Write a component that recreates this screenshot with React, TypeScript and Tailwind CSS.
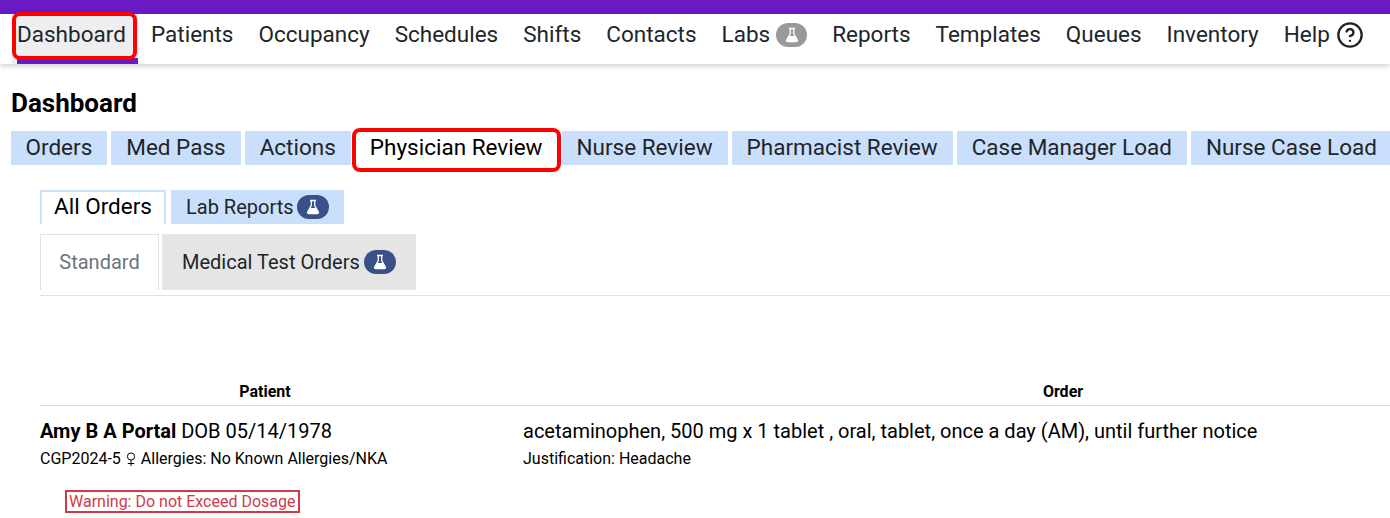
import { CircleHelp } from 'lucide-react'

const navItems = ['Patients', 'Occupancy', 'Schedules', 'Shifts', 'Contacts']
const navItemsAfter = ['Reports', 'Templates', 'Queues', 'Inventory']
const tabs = ['Orders', 'Med Pass', 'Actions', 'Physician Review', 'Nurse Review', 'Pharmacist Review', 'Case Manager Load', 'Nurse Case Load']

function Flask({ className }: { className?: string }) {
  return (
    <svg viewBox="0 0 16 16" className={className} fill="none">
      <path d="M5 1.5h6M6.3 2v4.6L2.6 13a1 1 0 0 0 .9 1.5h9a1 1 0 0 0 .9-1.5L9.7 6.6V2" stroke="white" strokeWidth="1.3" strokeLinejoin="round" />
      <path d="M5.2 9h5.6l2.1 4.2a.6.6 0 0 1-.5.9H3.6a.6.6 0 0 1-.5-.9z" fill="white" />
    </svg>
  )
}

function LabBadge({ color }: { color: string }) {
  return (
    <span className={`flex h-6 w-8 items-center justify-center rounded-full ${color}`}>
      <Flask className="h-4 w-4" />
    </span>
  )
}

export default function App() {
  return (
    <div className="h-[518px] w-[1390px] overflow-hidden bg-white font-['Roboto',sans-serif] text-black">
      <div className="h-[14px] bg-[#6a1ac4]" />
      <nav className="flex h-[50px] items-stretch pl-[12px] text-[22.5px] text-[#212529] shadow-[0_2px_6px_rgba(0,0,0,0.2)]">
        <div className="relative mr-[0.5px] flex w-[126px] items-center bg-[#eeeef0] pb-[8px] pl-[5px]">
          Dashboard
          <div className="absolute bottom-0 left-[5px] right-0 h-[6px] bg-[#6a1ac4]" />
          <div className="absolute left-0 top-[-2px] h-[48px] w-[125px] rounded-lg border-4 border-[#ff0000]" />
        </div>
        {navItems.map((item) => (
          <div key={item} className="flex items-center px-[12.5px] pb-[8px]">{item}</div>
        ))}
        <div className="flex items-center gap-[6px] px-[12.5px] pb-[8px]">
          Labs
          <span className="flex h-6 w-[31px] items-center justify-center rounded-full bg-[#999999]">
            <Flask className="h-4 w-4" />
          </span>
        </div>
        {navItemsAfter.map((item) => (
          <div key={item} className="flex items-center px-[12.5px] pb-[8px]">{item}</div>
        ))}
        <div className="flex items-center gap-[6px] px-[12.5px] pb-[8px]">
          Help
          <CircleHelp className="h-7 w-7" strokeWidth={2} />
        </div>
      </nav>

      <h1 className="ml-[11px] mt-[24px] text-[26px] font-bold leading-[30px]">Dashboard</h1>

      <div className="ml-[10.5px] mt-[13px] flex h-[34px] gap-1 text-[22.5px] text-[#212529]">
        {tabs.map((tab) => (
          <div
            key={tab}
            className={`relative flex shrink-0 items-center px-[15px] ${tab === 'Physician Review' ? 'bg-white text-black' : 'bg-[#c9dffb]'}`}
          >
            {tab}
            {tab === 'Physician Review' && (
              <div className="absolute -bottom-[7px] -left-[3px] -right-[3px] -top-[3px] rounded-lg border-4 border-[#ff0000]" />
            )}
          </div>
        ))}
      </div>

      <div className="ml-10 mt-[25px] flex h-[34px] items-stretch gap-[5px]">
        <div className="flex w-[126px] items-center justify-center border-x-2 border-t-2 border-[#c9dffb] pb-[2px] text-[22.5px]">All Orders</div>
        <div className="flex items-center gap-[3px] bg-[#c9dffb] px-[15px] text-[20px] text-[#212529]">
          Lab Reports
          <LabBadge color="bg-[#3a5088]" />
        </div>
      </div>

      <div className="ml-10 mt-[10px] flex h-[62px] border-b border-[#dee2e6]">
        <div className="flex h-[56px] w-[119px] items-center justify-center border-x border-t border-[#dee2e6] pb-[2px] text-[20px] text-[#6c757d]">Standard</div>
        <div className="ml-[3px] flex h-[56px] items-center gap-1 bg-[#e5e5e5] px-5 text-[20px] text-[#212529]">
          Medical Test Orders
          <LabBadge color="bg-[#3a5088]" />
        </div>
      </div>

      <div className="ml-10 mt-[85px] w-[1600px] text-[#212529]">
        <div className="grid h-[25px] grid-cols-[450px_1128px] border-b border-[#c9dffb] text-[16px] font-bold leading-[22px]">
          <div className="text-center text-black">Patient</div>
          <div className="ml-[18px] text-center text-black">Order</div>
        </div>
        <div className="grid grid-cols-[483px_1fr] pt-[12px]">
          <div>
            <div className="text-[20px] leading-[26px] text-black">
              <span className="font-bold">Amy B A Portal</span> DOB 05/14/1978
            </div>
            <div className="mt-[4px] flex items-center text-[16px] leading-[22px] text-black">
              CGP2024-5
              <svg viewBox="0 0 12 16" className="mx-1 h-4 w-[12px]" fill="none" stroke="currentColor" strokeWidth="1">
                <circle cx="6" cy="5.5" r="3.6" />
                <path d="M6 9v6M2.8 12.5h6.4" />
              </svg>
              Allergies: No Known Allergies/NKA
            </div>
            <div className="ml-[25px] mt-[20px] inline-block border-2 border-[#d13a4b] pl-[2px] pr-[3px] text-[16px] leading-[19px] text-[#d13a4b]">Warning: Do not Exceed Dosage</div>
          </div>
          <div>
            <div className="text-[20px] leading-[26px] text-black">acetaminophen, 500 mg x 1 tablet , oral, tablet, once a day (AM), until further notice</div>
            <div className="mt-[4px] text-[16px] leading-[22px] text-black">Justification: Headache</div>
          </div>
        </div>
      </div>
    </div>
  )
}
